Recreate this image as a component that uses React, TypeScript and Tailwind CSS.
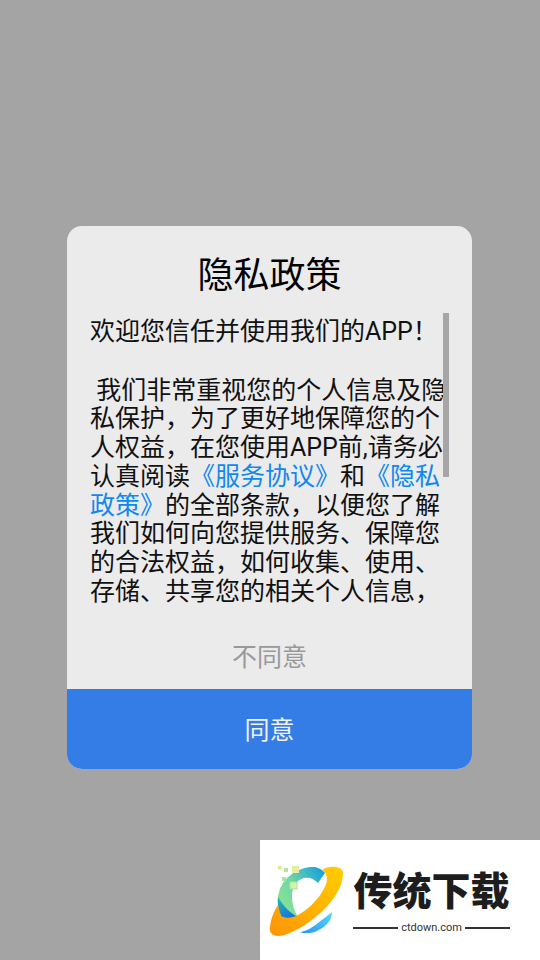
const cjk = "font-['Roboto','Noto_Sans_CJK_SC',sans-serif]";

function Logo() {
  return (
    <svg width="85" height="80" viewBox="0 0 85 80" className="shrink-0">
      <defs>
        <linearGradient id="arc" x1="0" y1="0.8" x2="1" y2="0.1">
          <stop offset="0" stopColor="#8fe58a" />
          <stop offset="0.45" stopColor="#6fd6a8" />
          <stop offset="1" stopColor="#14a0dc" />
        </linearGradient>
        <linearGradient id="inner" x1="0.2" y1="0" x2="0.7" y2="1">
          <stop offset="0" stopColor="#22b5b5" />
          <stop offset="1" stopColor="#1560e8" />
        </linearGradient>
        <linearGradient id="ring" x1="0" y1="1" x2="1" y2="0">
          <stop offset="0" stopColor="#ff9406" />
          <stop offset="1" stopColor="#ffcf00" />
        </linearGradient>
        <linearGradient id="sky" x1="0" y1="1" x2="1" y2="0">
          <stop offset="0" stopColor="#2b93f5" />
          <stop offset="1" stopColor="#52dcff" />
        </linearGradient>
      </defs>
      <path d="M14 32 C18 17 34 6 50 7 C54 8 58 10 60 13 L53 23 C48 18 44 17 39 18 C31 20 27 28 27 36 C27 44 29 51 33 57 L20 63 C13 52 11 42 14 32Z" fill="url(#arc)" />
      <path d="M13 37 C19 47 25 53 33 57 L21 64 C15 57 12 47 13 37Z" fill="url(#inner)" />
      <path d="M65 7 C72 6 78 8 78 13 C78 22 74 31 68 39 C60 50 50 58 40 65 C30 71 20 76 13 76 C7 76 4 72 5 67 C6 58 9 51 13 45 L16 56 C22 59 27 58 33 55 C42 50 51 42 57 32 C61 26 62 22 62 18 C61 14 60 11 57 10 C60 8 62 7 65 7Z" fill="url(#ring)" />
      <path d="M67 52 C67 57 65 61 62 64 C56 70 47 74 41 73 C39 73 37 73 35 72 C42 71 48 67 53 63 C58 59 63 55 67 52Z" fill="url(#sky)" />
      <rect x="13" y="6" width="3.5" height="3.5" fill="#dfe88a" />
      <rect x="19" y="8" width="4" height="4" fill="#b5e89a" />
      <rect x="27" y="6" width="7" height="7" fill="#e4eea0" />
      <rect x="17" y="17" width="4" height="4" fill="#a8e69c" />
      <rect x="25" y="22" width="7" height="7" fill="#d8f0a8" stroke="#a8e69c" />
    </svg>
  );
}

export default function App() {
  return (
    <div className={`relative flex h-[960px] w-[540px] flex-col overflow-hidden bg-[#a4a4a4] ${cjk}`}>
      <div className="ml-[67px] mt-[226px] flex h-[543px] w-[405px] flex-col overflow-hidden rounded-[15px] bg-[#ebebeb]">
        <h1 className="pt-[21px] text-center text-[36px] leading-[58px] font-normal text-black">隐私政策</h1>
        <div className="relative mt-[8px] h-[293px]">
          <div className="h-full overflow-hidden pl-[23px] pr-[22px] pt-[5px] text-[25px] leading-[28.7px] text-[#111]">
            <p>欢迎您信任并使用我们的APP！</p>
            <p className="mt-[30px]">
              <span className="whitespace-pre"> </span>我们非常重视您的个人信息及隐私保护，为了更好地保障您的个人权益，在您使用APP前,请务必认真阅读
              <span className="text-[#0f88f2]">《服务协议》</span>和<span className="text-[#0f88f2]">《隐私政策》</span>
              的全部条款，以便您了解我们如何向您提供服务、保障您的合法权益，如何收集、使用、存储、共享您的相关个人信息，
            </p>
          </div>
          <div className="absolute left-[376px] top-0 h-[164px] w-[6px] bg-[#a6a6a6]" />
        </div>
        <button className="mt-auto h-[83px] pt-[21px] text-[25px] text-[#999]">不同意</button>
        <button className="h-[80px] shrink-0 bg-[#347ce6] pt-[4px] text-[25px] text-[#f2f2f2]">同意</button>
      </div>
      <div className="absolute bottom-0 right-0 flex h-[120px] w-[280px] items-center bg-white pl-[5px]">
        <Logo />
        <div className="ml-[3px] flex w-[157px] flex-col items-stretch pt-[2px]">
          <div className="text-center text-[39px] leading-[46px] font-black whitespace-nowrap text-[#1d1d1d]">传统下载</div>
          <div className="mt-[7px] flex items-center gap-[3px]">
            <span className="h-[2px] flex-1 bg-[#333]" />
            <span className="text-[11px] leading-[12px] text-[#333]">ctdown.com</span>
            <span className="h-[2px] flex-1 bg-[#333]" />
          </div>
        </div>
      </div>
    </div>
  );
}
